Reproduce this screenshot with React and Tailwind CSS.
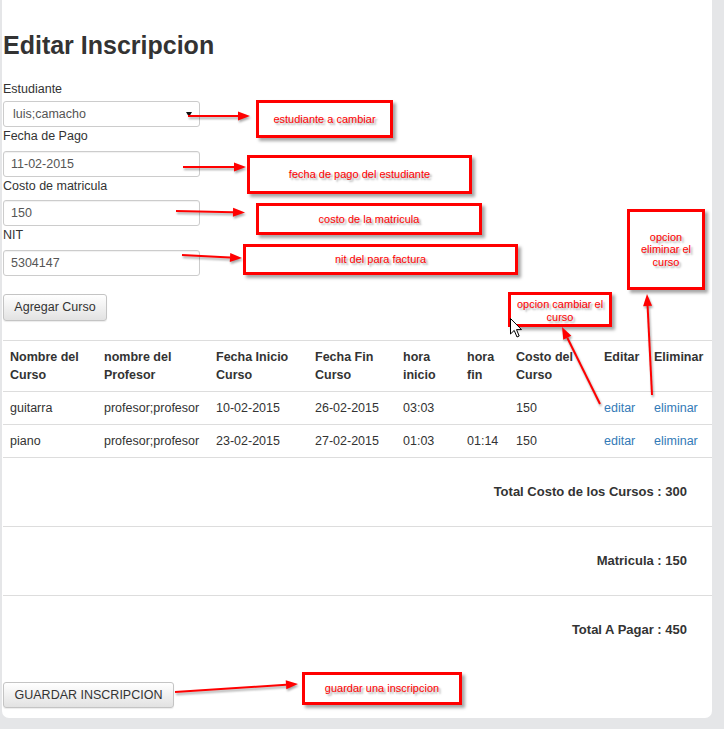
import React from 'react';

const cursos = [
  { nombre: 'guitarra', profesor: 'profesor;profesor', inicio: '10-02-2015', fin: '26-02-2015', hIni: '03:03', hFin: '', costo: '150' },
  { nombre: 'piano', profesor: 'profesor;profesor', inicio: '23-02-2015', fin: '27-02-2015', hIni: '01:03', hFin: '01:14', costo: '150' },
];

const cols = [94, 112, 99, 88, 64, 49, 88, 50, 65];

const headers = [
  ['Nombre del', 'Curso'],
  ['nombre del', 'Profesor'],
  ['Fecha Inicio', 'Curso'],
  ['Fecha Fin', 'Curso'],
  ['hora', 'inicio'],
  ['hora', 'fin'],
  ['Costo del', 'Curso'],
  ['Editar'],
  ['Eliminar'],
];

const arrows = [
  [188, 116, 250, 116],
  [183, 167, 246, 167],
  [176, 211, 245, 212.5],
  [182, 255, 242, 258],
  [600, 404, 562, 327],
  [652, 395, 647, 294],
  [175, 692, 298, 684],
];

const Arrow = ({ a }) => {
  const [x1, y1, x2, y2] = a;
  const len = Math.hypot(x2 - x1, y2 - y1);
  const ux = (x2 - x1) / len;
  const uy = (y2 - y1) / len;
  const bx = x2 - ux * 12;
  const by = y2 - uy * 12;
  const head = `${x2},${y2} ${bx - uy * 4.5},${by + ux * 4.5} ${bx + uy * 4.5},${by - ux * 4.5}`;
  return (
    <g>
      <line x1={x1} y1={y1} x2={bx} y2={by} stroke="#ff0000" strokeWidth="2" />
      <polygon points={head} fill="#ff0000" />
    </g>
  );
};

const Field = ({ label, value }) => (
  <div>
    <div className="mb-[5.5px]">{label}</div>
    <div className="flex h-[26px] w-[197px] items-center rounded-[3px] border border-[#ccc] px-[7px] text-[#555] shadow-[inset_0_1px_1px_rgba(0,0,0,0.06)]">
      {value}
    </div>
  </div>
);

const Note = ({ className, children }) => (
  <div
    className={`absolute border-[3px] border-[#ff0000] bg-white text-center text-[11px] leading-[12.5px] text-[#ff0000] shadow-[3px_3px_3px_rgba(0,0,0,0.35)] [text-shadow:2px_2px_2px_rgba(0,0,0,0.35)] ${className}`}
  >
    {children}
  </div>
);

const Button = ({ className, children }) => (
  <div
    className={`flex items-center justify-center whitespace-nowrap rounded-[3px] border border-[#c4c4c4] bg-gradient-to-b from-white to-[#e2e2e2] text-[#333] shadow-[0_1px_1px_rgba(0,0,0,0.08)] ${className}`}
  >
    {children}
  </div>
);

export default function App() {
  return (
    <div className="relative min-h-[729px] bg-[#e5e6e8] font-['Liberation_Sans',Arial,sans-serif] text-[12.5px] leading-[18px] text-[#333]">
      <div className="ml-[2px] w-[710px] rounded-b-[7px] bg-white pb-[10px] pl-[1px] pt-[32px]">
        <h1 className="mb-[20px] text-[25px] font-bold leading-[27.5px]">Editar Inscripcion</h1>

        <div>
          <div className="mb-[3.5px]">Estudiante</div>
          <div className="relative flex h-[26px] w-[197px] items-center rounded-[3px] border border-[#ccc] px-[9px] text-[#555]">
            luis;camacho
            <svg className="absolute right-[7px] top-[10px]" width="6" height="5" viewBox="0 0 6 5">
              <polygon points="0,0 6,0 3,5" fill="#111" />
            </svg>
          </div>
        </div>
        <Field label="Fecha de Pago" value="11-02-2015" />
        <Field label="Costo de matricula" value="150" />
        <Field label="NIT" value="5304147" />

        <Button className="mt-[18px] h-[27px] w-[104px]">Agregar Curso</Button>

        <table className="mt-[19px] w-full table-fixed border-collapse">
          <colgroup>
            {cols.map((w, i) => (
              <col key={i} style={{ width: w }} />
            ))}
          </colgroup>
          <thead>
            <tr className="border-t border-[#ddd]">
              {headers.map((h, i) => (
                <th key={i} className="whitespace-nowrap px-[7px] py-[7px] text-left align-top font-bold">
                  {h[0]}
                  {h[1] && <br />}
                  {h[1]}
                </th>
              ))}
            </tr>
          </thead>
          <tbody>
            {cursos.map((c) => (
              <tr key={c.nombre} className="border-t border-[#ddd]">
                <td className="px-[7px] py-[7px]">{c.nombre}</td>
                <td className="whitespace-nowrap px-[7px] py-[7px]">{c.profesor}</td>
                <td className="px-[7px] py-[7px]">{c.inicio}</td>
                <td className="px-[7px] py-[7px]">{c.fin}</td>
                <td className="px-[7px] py-[7px]">{c.hIni}</td>
                <td className="px-[7px] py-[7px]">{c.hFin}</td>
                <td className="px-[7px] py-[7px]">{c.costo}</td>
                <td className="px-[7px] py-[7px] text-[#337ab7]">editar</td>
                <td className="px-[7px] py-[7px] text-[#337ab7]">eliminar</td>
              </tr>
            ))}
          </tbody>
        </table>

        <div className="flex h-[69px] items-center justify-end border-t border-[#ddd] pr-[25px] text-[13px] font-bold">
          Total Costo de los Cursos : 300
        </div>
        <div className="flex h-[69px] items-center justify-end border-t border-[#ddd] pr-[25px] text-[13px] font-bold">
          Matricula : 150
        </div>
        <div className="flex h-[69px] items-center justify-end border-t border-[#ddd] pr-[25px] text-[13px] font-bold">
          Total A Pagar : 450
        </div>

        <Button className="mt-[18px] h-[26px] w-[171px]">GUARDAR INSCRIPCION</Button>
      </div>

      {/* anotaciones */}
      <Note className="left-[256px] top-[100px] flex h-[38px] w-[137px] items-center justify-center">estudiante a cambiar</Note>
      <Note className="left-[247px] top-[155px] flex h-[39px] w-[225px] items-center justify-center">fecha de pago del estudiante</Note>
      <Note className="left-[256px] top-[203px] flex h-[32px] w-[226px] items-center justify-center">costo de la matricula</Note>
      <Note className="left-[243px] top-[244px] flex h-[31px] w-[275px] items-center justify-center">nit del para factura</Note>
      <Note className="left-[627px] top-[209px] flex h-[81px] w-[78px] items-center justify-center">
        opcion
        <br />
        eliminar el
        <br />
        curso
      </Note>
      <Note className="left-[508px] top-[292px] h-[35px] w-[104px] pt-[3px]">
        opcion cambiar el
        <br />
        curso
      </Note>
      <Note className="left-[302px] top-[672px] flex h-[33px] w-[160px] items-center justify-center">guardar una inscripcion</Note>

      <svg
        className="pointer-events-none absolute left-0 top-0 [filter:drop-shadow(1px_2px_1px_rgba(0,0,0,0.35))]"
        width="724"
        height="729"
      >
        {arrows.map((a, i) => (
          <Arrow key={i} a={a} />
        ))}
      </svg>

      <svg className="pointer-events-none absolute left-[510px] top-[318px]" width="13" height="21" viewBox="0 0 13 21">
        <path d="M0.5 0.5 L0.5 16 L4.2 12.4 L7 19 L9.2 18 L6.5 11.6 L11.5 11.6 Z" fill="#fff" stroke="#000" strokeWidth="1" />
      </svg>
    </div>
  );
}
